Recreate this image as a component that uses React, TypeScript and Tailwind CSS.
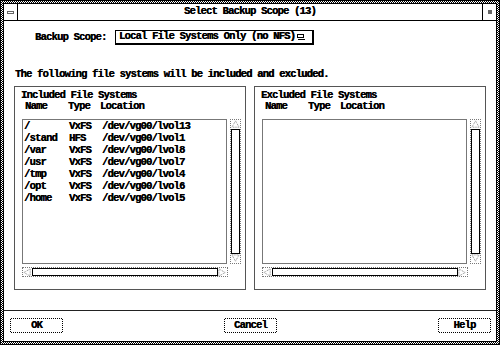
import React from "react";

const dither =
  "bg-[repeating-conic-gradient(#000_0%_25%,#fff_0%_50%)] bg-[length:2px_2px]";

const included = [
  ["/", "VxFS", "/dev/vg00/lvol13"],
  ["/stand", "HFS", "/dev/vg00/lvol1"],
  ["/var", "VxFS", "/dev/vg00/lvol8"],
  ["/usr", "VxFS", "/dev/vg00/lvol7"],
  ["/tmp", "VxFS", "/dev/vg00/lvol4"],
  ["/opt", "VxFS", "/dev/vg00/lvol6"],
  ["/home", "VxFS", "/dev/vg00/lvol5"],
];

function Arrow({ dir }: { dir: "up" | "down" | "left" | "right" }) {
  const pts = {
    up: "5,1 9,8 1,8",
    down: "1,1 9,1 5,8",
    left: "1,5 8,1 8,9",
    right: "1,1 8,5 1,9",
  }[dir];
  return (
    <svg width="9" height="9" viewBox="0 0 10 10" className="block shrink-0">
      <polygon points={pts} fill="#fff" stroke="#777" strokeWidth="1" strokeDasharray="1 1" />
    </svg>
  );
}

function VScroll() {
  return (
    <div className="w-[11px] h-[145px] flex flex-col border border-dotted border-[#777] bg-white">
      <Arrow dir="up" />
      <div className="flex-1 border border-black bg-white" />
      <Arrow dir="down" />
    </div>
  );
}

function HScroll() {
  return (
    <div className="w-[206px] h-[10px] flex flex-row border border-dotted border-[#777] bg-white">
      <Arrow dir="left" />
      <div className="flex-1 border border-black bg-white" />
      <Arrow dir="right" />
    </div>
  );
}

function Panel({ title, rows }: { title: string; rows: string[][] }) {
  return (
    <div className="w-[232px] h-[204px] border border-[#555] pt-[3px]">
      <div className="pl-[6px] leading-[11px]">{title}</div>
      <div className="flex pl-[10px] leading-[11px]">
        <span className="w-[43px]">Name</span>
        <span className="w-[32px]">Type</span>
        <span>Location</span>
      </div>
      <div className="flex mt-[7px] ml-[7px] gap-[3px]">
        <div className="w-[205px] h-[145px] border border-[#777] pl-[1px]">
          {rows.map((r) => (
            <div key={r[0]} className="flex leading-[12px]">
              <span className="w-[45px]">{r[0]}</span>
              <span className="w-[33px]">{r[1]}</span>
              <span>{r[2]}</span>
            </div>
          ))}
        </div>
        <VScroll />
      </div>
      <div className="mt-[3px] ml-[7px]">
        <HScroll />
      </div>
    </div>
  );
}

function Button({ label }: { label: string }) {
  return (
    <div className={`w-[53px] h-[15px] p-[1px] ${dither}`}>
      <div className="w-full h-full bg-white flex items-center justify-center leading-none">
        {label}
      </div>
    </div>
  );
}

export default function App() {
  return (
    <div
      className="w-[500px] h-[345px] bg-white text-black font-bold text-[10.5px] tracking-[-0.8px] whitespace-nowrap [text-shadow:0.35px_0_0_#000]"
      style={{ fontFamily: '"Liberation Mono", monospace' }}
    >
      <div className={`w-full h-full border border-black p-[2px] ${dither}`}>
        <div className="w-full h-full border border-black bg-white flex flex-col">
          {/* title bar */}
          <div className="h-[17px] flex border-b border-black">
            <div className="w-[14px] border-r border-black flex items-center justify-center">
              <div className="w-[7px] h-[3px] border border-[#666]" />
            </div>
            <div className="flex-1 flex items-center justify-center">
              Select Backup Scope (13)
            </div>
            <div className="w-[14px] border-l border-black flex items-center justify-center">
              <div className="w-[4px] h-[4px] bg-[#666]" />
            </div>
          </div>

          {/* body */}
          <div className="flex-1 flex flex-col">
            <div className="flex items-center mt-[8px] h-[17px]">
              <span className="ml-[31px] w-[80px]">Backup Scope:</span>
              <div className="w-[199px] h-[15px] border border-black border-r-2 border-b-2 flex items-center pl-[3px]">
                <span>Local File Systems Only (no NFS)</span>
                <svg width="8" height="6" viewBox="0 0 8 6" className="ml-[2px] shrink-0">
                  <rect x="0.5" y="0.5" width="6" height="3" fill="none" stroke="#000" />
                  <line x1="1" y1="5.5" x2="8" y2="5.5" stroke="#000" />
                </svg>
              </div>
            </div>

            <div className="ml-[11px] mt-[23px] leading-[11px]">
              The following file systems will be included and excluded.
            </div>

            <div className="flex mt-[6px] ml-[10px] gap-[8px]">
              <Panel title="Included File Systems" rows={included} />
              <Panel title="Excluded File Systems" rows={[]} />
            </div>
          </div>

          {/* action area */}
          <div className="h-[31px] border-t border-[#222] flex justify-between items-start pt-[7px] pl-[6px] pr-[5px]">
            <Button label="OK" />
            <Button label="Cancel" />
            <Button label="Help" />
          </div>
        </div>
      </div>
    </div>
  );
}
